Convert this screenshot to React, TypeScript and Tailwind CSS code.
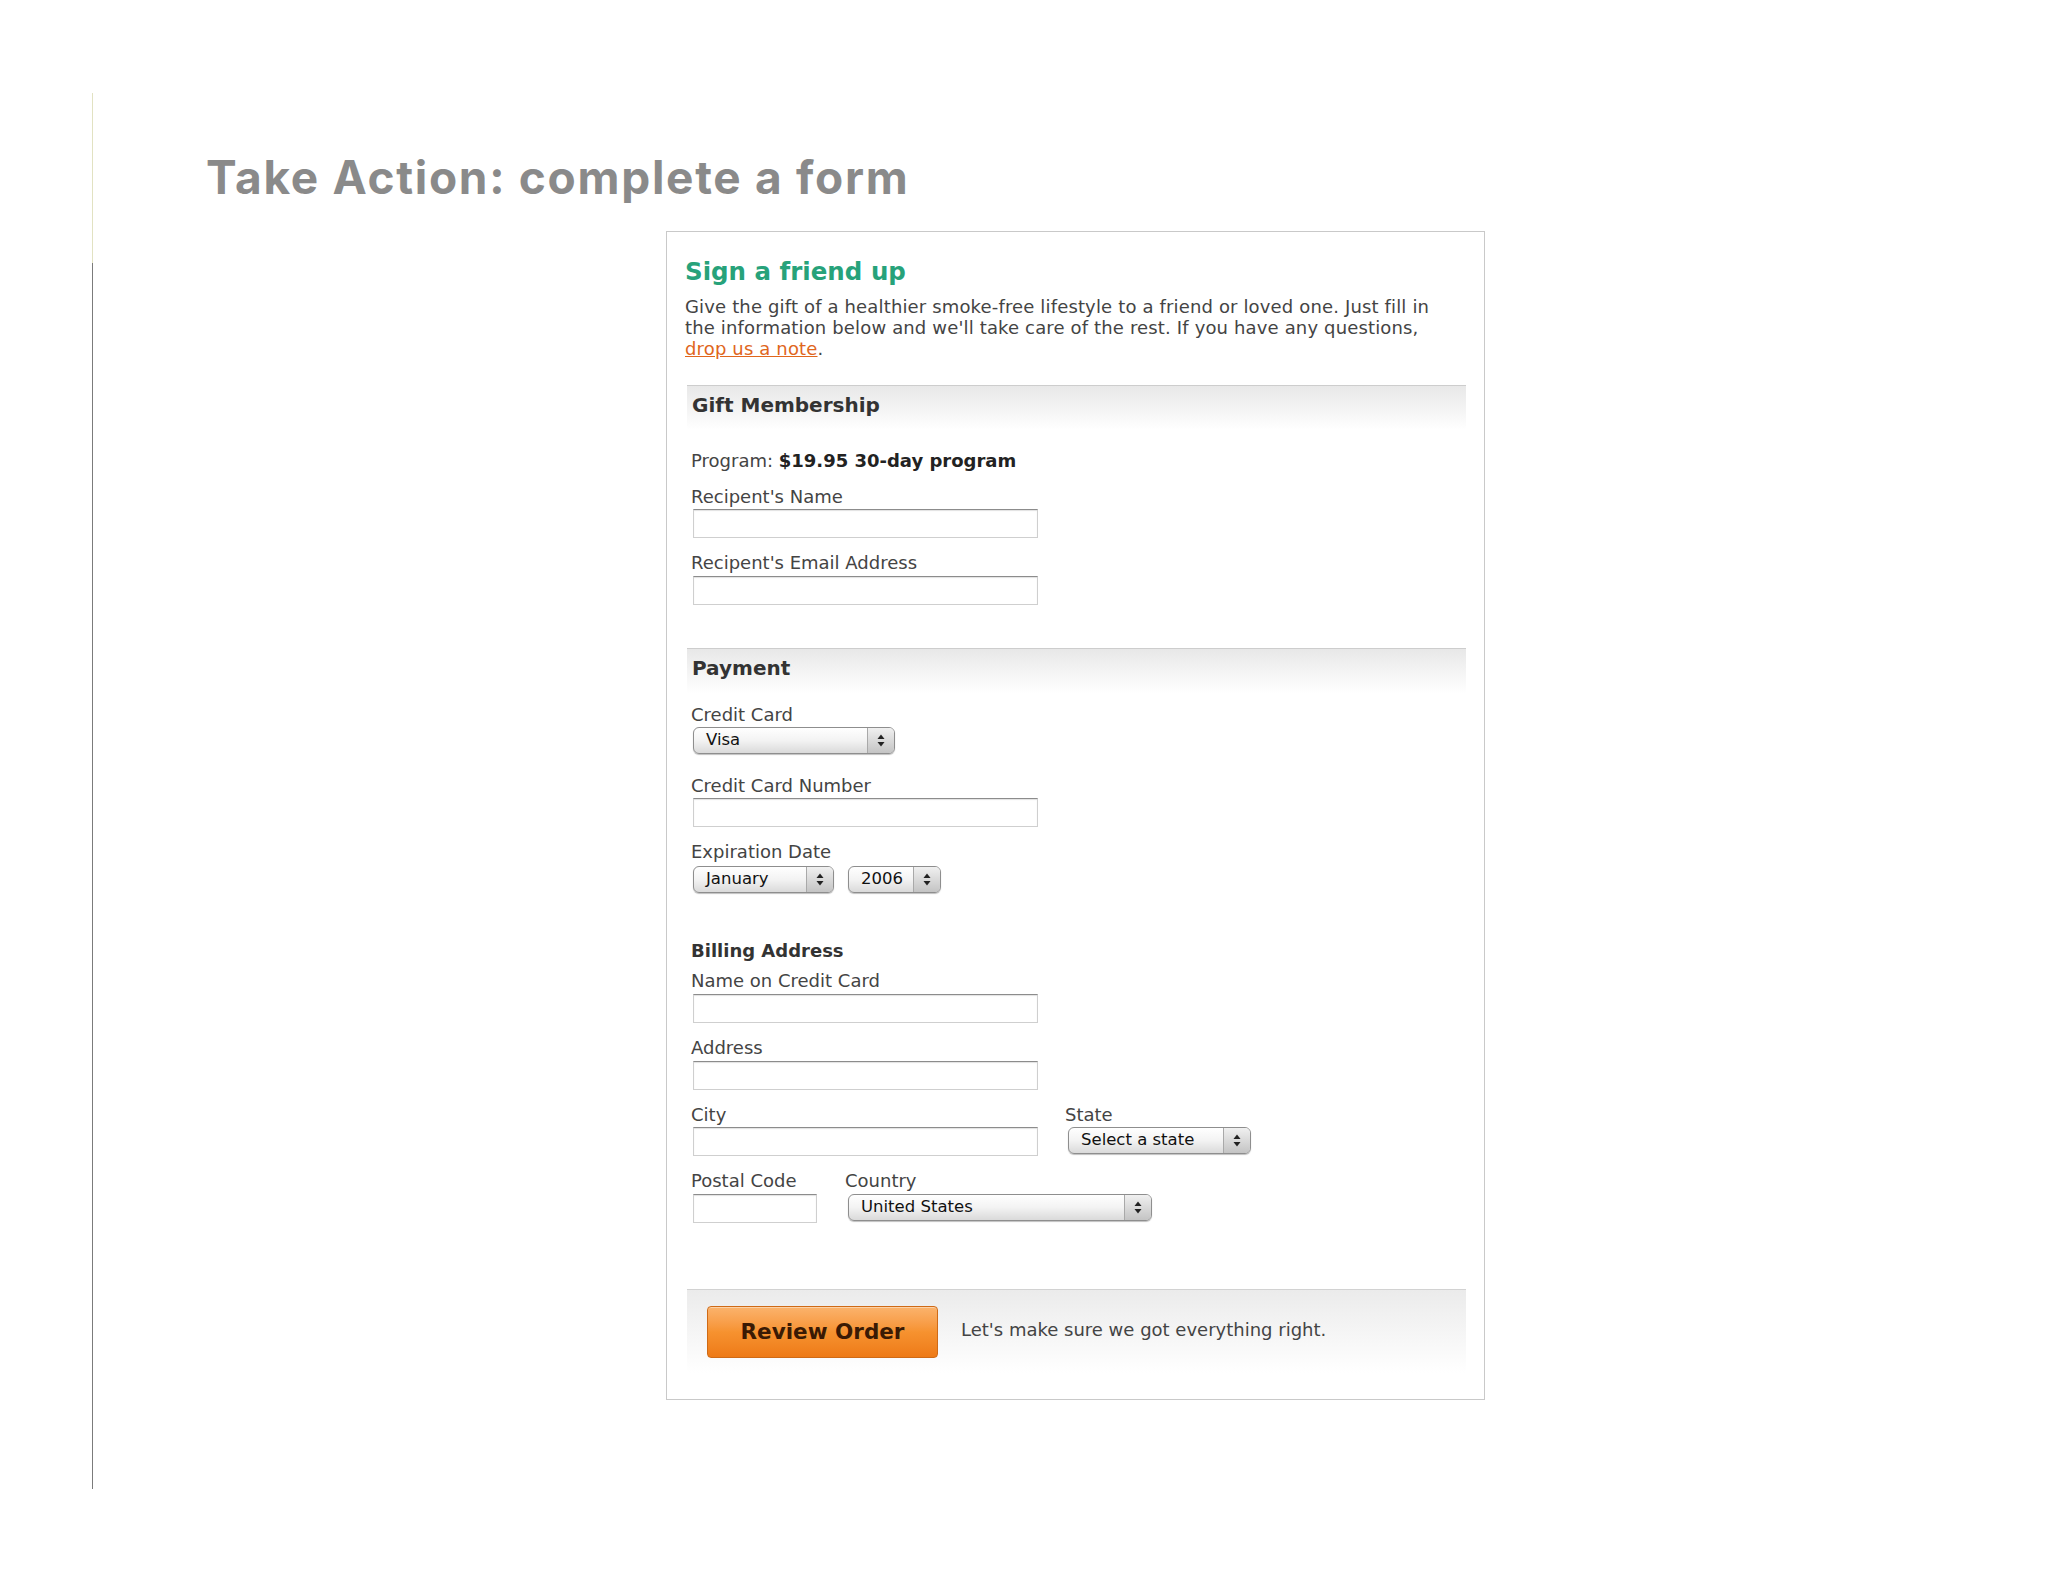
import { ReactNode } from "react";

function TextInput({ className = "w-[345px]" }: { className?: string }) {
  return (
    <div
      className={`h-[29px] border border-[#cfcfcf] border-t-[#8c8c8c] bg-white shadow-[inset_0_1px_1px_rgba(0,0,0,0.12)] ${className}`}
    />
  );
}

function AquaSelect({ value, className }: { value: string; className: string }) {
  return (
    <div
      className={`flex h-[27px] items-stretch overflow-hidden rounded-[6px] border border-[#8e8e8e] bg-linear-to-b from-white via-[#f3f3f3] to-[#dadada] shadow-[0_1px_1px_rgba(0,0,0,0.25)] ${className}`}
    >
      <span className="flex flex-1 items-center pl-[12px] text-[16.5px] text-[#111]">
        {value}
      </span>
      <div className="flex w-[27px] items-center justify-center border-l border-[#a9a9a9] bg-linear-to-b from-[#f0f0f0] to-[#c4c4c4]">
        <svg width="8" height="15" viewBox="0 0 8 15">
          <polygon points="4,1.5 7.5,6 0.5,6" fill="#222" />
          <polygon points="0.5,9 7.5,9 4,13.5" fill="#222" />
        </svg>
      </div>
    </div>
  );
}

function Label({ children }: { children: ReactNode }) {
  return <div className="text-[18px] leading-[22px] text-[#444]">{children}</div>;
}

function SectionBand({ title, className }: { title: string; className: string }) {
  return (
    <div
      className={`ml-[2px] h-[45px] border-t border-[#cdcdcd] bg-linear-to-b from-[#e8e8e8] to-white pl-[5px] pt-[7px] ${className}`}
    >
      <h3 className="text-[20px] leading-[24px] font-bold text-[#333]">{title}</h3>
    </div>
  );
}

export default function App() {
  return (
    <div className="flex min-h-[1582px] w-full bg-white pt-[93px]">
      <div className="ml-[92px] flex w-px flex-col">
        <div className="h-[170px] w-px bg-[#e2e2c2]" />
        <div className="h-[1226px] w-px bg-[#7b7b7b]" />
      </div>

      <div className="ml-[113px] flex flex-col">
        <h1 className="mt-[61px] font-['Inter',sans-serif] text-[46px] leading-[46px] font-bold tracking-[1.7px] text-[#8a8a8a]">
          Take Action: complete a form
        </h1>

        <div className="mt-[31px] ml-[460px] h-[1169px] w-[819px] border border-[#c9c9c9] bg-white px-[18px] pt-[25px] font-['DejaVu_Sans',sans-serif]">
          <h2 className="text-[24.5px] leading-[30px] font-bold text-[#27a27a]">
            Sign a friend up
          </h2>
          <p className="mt-[9px] text-[18px] leading-[21px] tracking-[0.15px] text-[#444]">
            Give the gift of a healthier smoke-free lifestyle to a friend or loved one. Just fill in
            <br />
            the information below and we'll take care of the rest. If you have any questions,
            <br />
            <a className="text-[#e0661c] underline">drop us a note</a>.
          </p>

          <SectionBand title="Gift Membership" className="mt-[26px]" />

          <div className="pl-[6px]">
            <div className="mt-[20px] text-[18px] leading-[22px] text-[#444]">
              Program: <span className="font-bold text-[#222]">$19.95 30-day program</span>
            </div>
            <div className="mt-[14px]">
              <Label>Recipent's Name</Label>
              <div className="mt-[1px] ml-[2px]">
                <TextInput />
              </div>
            </div>
            <div className="mt-[14px]">
              <Label>Recipent's Email Address</Label>
              <div className="mt-[2px] ml-[2px]">
                <TextInput />
              </div>
            </div>
          </div>

          <SectionBand title="Payment" className="mt-[43px]" />

          <div className="pl-[6px]">
            <div className="mt-[11px]">
              <Label>Credit Card</Label>
              <div className="mt-[1px] ml-[2px]">
                <AquaSelect value="Visa" className="w-[202px]" />
              </div>
            </div>
            <div className="mt-[21px]">
              <Label>Credit Card Number</Label>
              <div className="mt-[1px] ml-[2px]">
                <TextInput />
              </div>
            </div>
            <div className="mt-[14px]">
              <Label>Expiration Date</Label>
              <div className="mt-[3px] ml-[2px] flex gap-[14px]">
                <AquaSelect value="January" className="w-[141px]" />
                <AquaSelect value="2006" className="w-[93px]" />
              </div>
            </div>

            <div className="mt-[47px] text-[18px] leading-[22px] font-bold text-[#333]">
              Billing Address
            </div>
            <div className="mt-[8px]">
              <Label>Name on Credit Card</Label>
              <div className="mt-[2px] ml-[2px]">
                <TextInput />
              </div>
            </div>
            <div className="mt-[14px]">
              <Label>Address</Label>
              <div className="mt-[2px] ml-[2px]">
                <TextInput />
              </div>
            </div>
            <div className="mt-[14px] flex">
              <div className="w-[374px]">
                <Label>City</Label>
                <div className="mt-[1px] ml-[2px]">
                  <TextInput />
                </div>
              </div>
              <div>
                <Label>State</Label>
                <div className="mt-[1px] ml-[3px]">
                  <AquaSelect value="Select a state" className="w-[183px]" />
                </div>
              </div>
            </div>
            <div className="mt-[14px] flex">
              <div className="w-[154px]">
                <Label>Postal Code</Label>
                <div className="mt-[2px] ml-[2px]">
                  <TextInput className="w-[124px]" />
                </div>
              </div>
              <div>
                <Label>Country</Label>
                <div className="mt-[2px] ml-[3px]">
                  <AquaSelect value="United States" className="w-[304px]" />
                </div>
              </div>
            </div>
          </div>

          <div className="mt-[66px] ml-[2px] flex h-[84px] items-start border-t border-[#d2d2d2] bg-linear-to-b from-[#ebebeb] via-[#f5f5f5] to-white pt-[16px] pl-[20px]">
            <button className="h-[52px] w-[231px] rounded-[4px] border border-[#cf6a16] bg-linear-to-b from-[#fbb36c] via-[#f6922f] to-[#ee7a16] text-[21.5px] font-bold text-[#3a1a04] shadow-[inset_0_1px_0_rgba(255,255,255,0.4)]">
              Review Order
            </button>
            <span className="ml-[23px] self-center pb-[20px] text-[18px] text-[#444]">
              Let's make sure we got everything right.
            </span>
          </div>
        </div>
      </div>
    </div>
  );
}
